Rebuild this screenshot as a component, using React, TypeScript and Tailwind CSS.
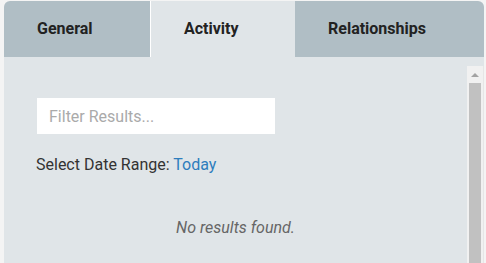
import React from 'react';

const Tab = ({ label, active, className }: { label: string; active?: boolean; className: string }) => (
  <div
    className={`flex items-center pl-[33px] text-[16px] font-bold text-[#222] ${
      active ? 'bg-[#e0e5e8]' : 'bg-[#b0bec5]'
    } ${className}`}
  >
    {label}
  </div>
);

export default function App() {
  return (
    <div
      className="flex w-[486px] h-[263px] overflow-hidden bg-[#f4f4f4] pl-[4px] pr-[2px] pt-[1px]"
      style={{ fontFamily: 'Roboto, "Noto Sans", sans-serif' }}
    >
      <div className="flex flex-1 flex-col">
        {/* Tabs */}
        <div className="flex h-[56px]">
          <Tab label="General" className="w-[146px] rounded-tl-[6px]" />
          <Tab label="Activity" active className="w-[145px] border-l border-white" />
          <Tab label="Relationships" className="flex-1 rounded-tr-[6px]" />
        </div>

        {/* Tab panel */}
        <div className="flex flex-1 bg-[#e0e5e8]">
          <div className="flex flex-1 flex-col pt-[41px]">
            <div className="pl-[32px]">
              <input
                type="text"
                placeholder="Filter Results..."
                className="h-[36px] w-[238px] ml-[1px] bg-white px-[12px] text-[16px] text-[#333] placeholder:text-[#aaa] outline-none"
              />
              <div className="mt-[19px] text-[16px] leading-[24px] text-[#333]">
                Select Date Range: <span className="text-[#2e7dbd]">Today</span>
              </div>
            </div>
            <div className="mt-[39px] text-center text-[16px] leading-[24px] italic text-[#666]">No results found.</div>
          </div>

          {/* Scrollbar */}
          <div className="mt-[9px] flex w-[17px] flex-col bg-[#f1f1f1] border-r border-[#e6e6e6]">
            <div className="flex h-[17px] items-center justify-center">
              <div className="h-0 w-0 border-x-[4px] border-b-[4px] border-x-transparent border-b-[#a3a3a3]" />
            </div>
            <div className="mx-[2px] flex-1 bg-[#c1c1c1]" />
          </div>
        </div>
      </div>
    </div>
  );
}
